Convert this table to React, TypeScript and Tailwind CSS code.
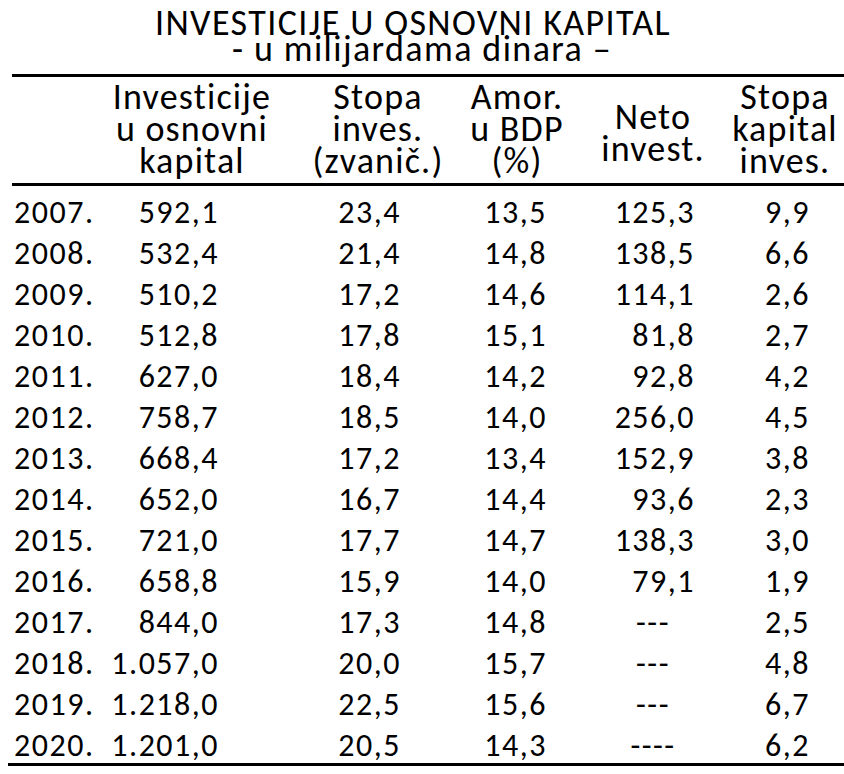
const rows: [string, string, string, string, string, string][] = [
  ["2007.", "592,1", "23,4", "13,5", "125,3", "9,9"],
  ["2008.", "532,4", "21,4", "14,8", "138,5", "6,6"],
  ["2009.", "510,2", "17,2", "14,6", "114,1", "2,6"],
  ["2010.", "512,8", "17,8", "15,1", "81,8", "2,7"],
  ["2011.", "627,0", "18,4", "14,2", "92,8", "4,2"],
  ["2012.", "758,7", "18,5", "14,0", "256,0", "4,5"],
  ["2013.", "668,4", "17,2", "13,4", "152,9", "3,8"],
  ["2014.", "652,0", "16,7", "14,4", "93,6", "2,3"],
  ["2015.", "721,0", "17,7", "14,7", "138,3", "3,0"],
  ["2016.", "658,8", "15,9", "14,0", "79,1", "1,9"],
  ["2017.", "844,0", "17,3", "14,8", "---", "2,5"],
  ["2018.", "1.057,0", "20,0", "15,7", "---", "4,8"],
  ["2019.", "1.218,0", "22,5", "15,6", "---", "6,7"],
  ["2020.", "1.201,0", "20,5", "14,3", "----", "6,2"],
];

const font = { fontFamily: "Carlito, Calibri, Lato, sans-serif" };

const cols = "grid grid-cols-[83px_218px_154px_124px_148px_116px]";

function HeadCell({ lines, className = "" }: { lines: string[]; className?: string }) {
  return (
    <div className={`flex flex-col items-center justify-center whitespace-nowrap text-[36px] leading-[32px] tracking-[1.2px] ${className}`}>
      {lines.map((l, i) => (
        <span key={i}>{l}</span>
      ))}
    </div>
  );
}

export default function App() {
  return (
    <div className="w-[844px] h-[774px] bg-white text-black overflow-hidden" style={font}>
      <div className="pt-[10px] flex flex-col items-center text-[36px] leading-[26px] tracking-[1.4px]">
        <div className="pr-[18px]">INVESTICIJE U OSNOVNI KAPITAL</div>
        <div>- u milijardama dinara –</div>
      </div>

      <div className="mt-[12px] ml-[12px] h-[3px] bg-black" />

      <div className={`${cols} pt-[4px] pb-[6px]`}>
        <div />
        <HeadCell lines={["Investicije", "u osnovni", "kapital"]} />
        <HeadCell lines={["Stopa", "inves.", "(zvanič.)"]} />
        <HeadCell lines={["Amor.", "u BDP", "(%)"]} />
        <HeadCell lines={["Neto", "invest."]} className="pt-[8px]" />
        <HeadCell lines={["Stopa", "kapital", "inves."]} />
      </div>

      <div className="ml-[12px] h-[3px] bg-black" />

      <div className="pt-[3px] text-[32px] tracking-[1.5px]">
        {rows.map((r) => (
          <div key={r[0]} className={`${cols} h-[41px] items-center whitespace-nowrap`}>
            <div className="pl-[14px]">{r[0]}</div>
            <div className="text-right pr-[82px]">{r[1]}</div>
            <div className="text-right pr-[54px]">{r[2]}</div>
            <div className="text-right pr-[32px]">{r[3]}</div>
            <div className={r[4].startsWith("-") ? "text-center" : "text-right pr-[32px]"}>{r[4]}</div>
            <div className="text-right pr-[33px]">{r[5]}</div>
          </div>
        ))}
      </div>

      <div className="ml-[8px] h-[3px] bg-black" />
    </div>
  );
}
